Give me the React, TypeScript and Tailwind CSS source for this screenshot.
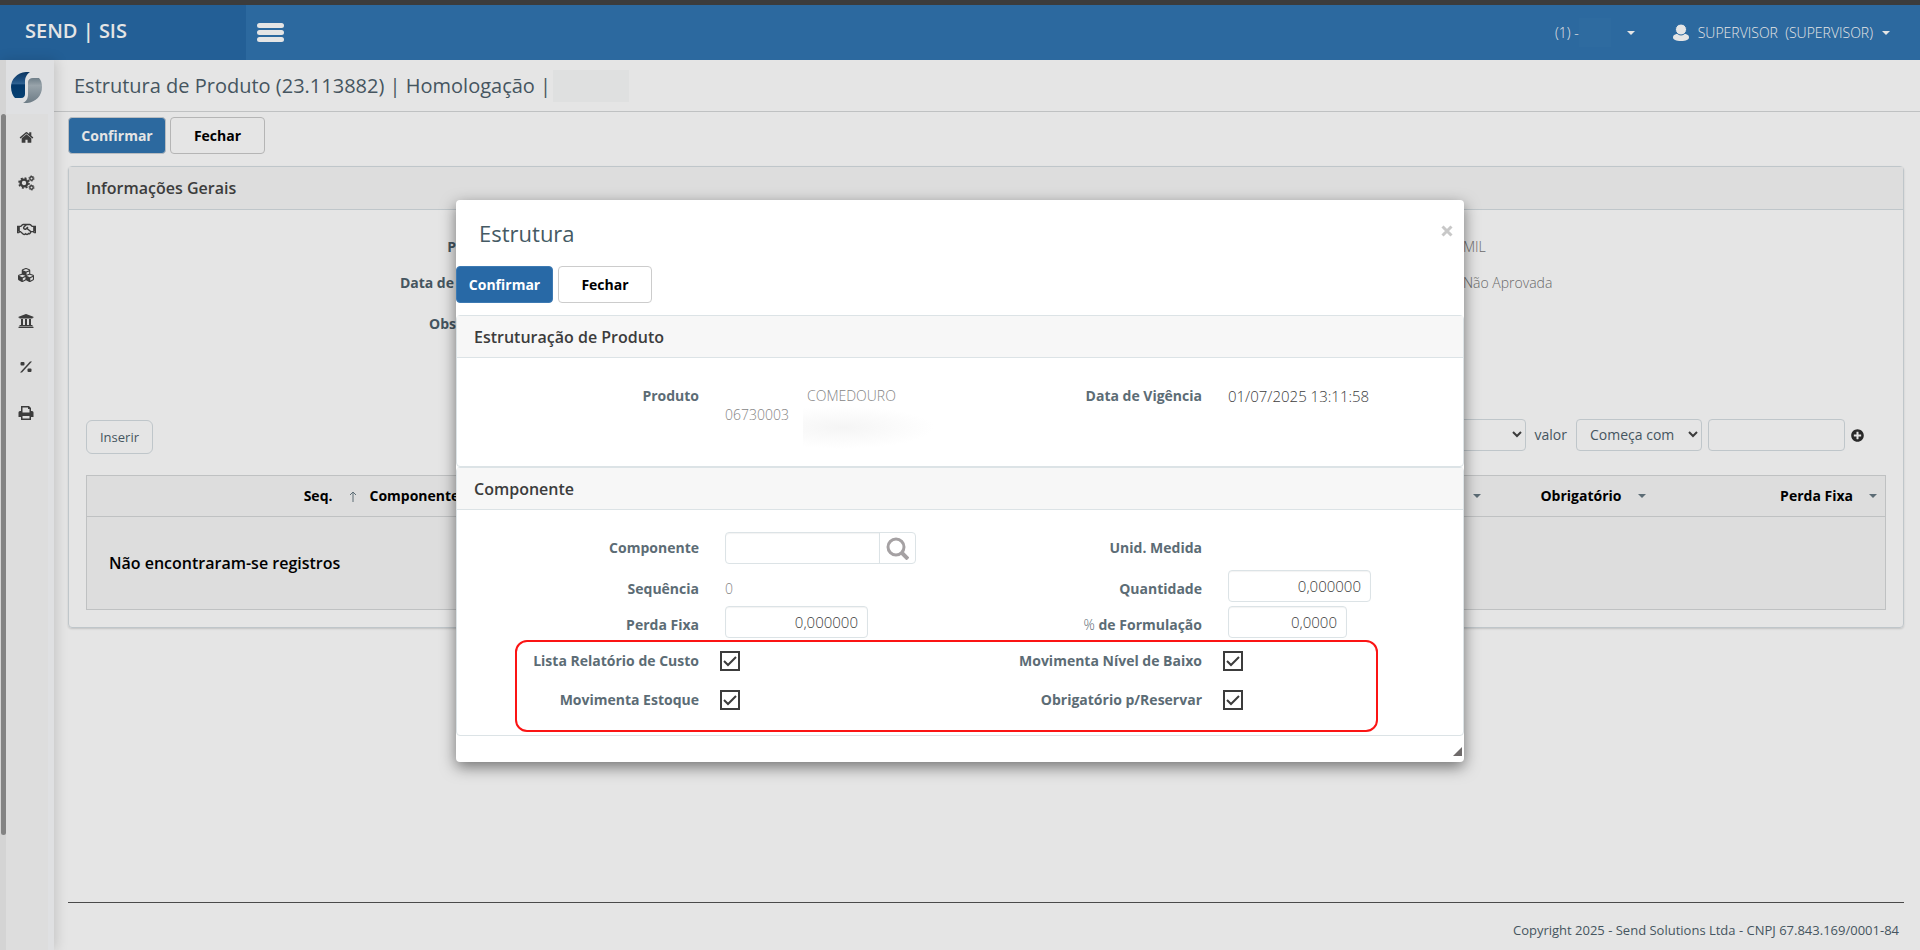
import React from "react";
import {
  FaRegHandshake,
  FaCubes,
  FaUniversity,
  FaPlusCircle,
} from "react-icons/fa";

const HomeIcon = () => (
  <svg viewBox="0 0 1792 1792" width="15" height="15" fill="currentColor">
    <path d="M1472 992v480q0 26-19 45t-45 19h-384v-384h-256v384h-384q-26 0-45-19t-19-45v-480q0-1 .5-3t.5-3l575-474 575 474q1 2 1 6zm223-69l-62 74q-8 9-21 11h-3q-13 0-21-7l-692-577-692 577q-12 8-24 7-13-2-21-11l-62-74q-8-10-7-23.500t11-21.500l719-599q32-26 76-26t76 26l244 204v-195q0-14 9-23t23-9h192q14 0 23 9t9 23v408l219 182q10 8 11 21.500t-7 23.500z" />
  </svg>
);

const CogsIcon = () => (
  <svg viewBox="0 0 17 16" width="17" height="16" fill="none" stroke="currentColor">
    <circle cx="6" cy="8" r="3.400" strokeWidth="2.400" />
    <circle cx="6" cy="8" r="5" strokeWidth="1.600" strokeDasharray="2 1.930" />
    <circle cx="13.500" cy="3.500" r="1.700" strokeWidth="1.400" />
    <circle cx="13.500" cy="3.500" r="2.600" strokeWidth="0.900" strokeDasharray="1.360 1.360" />
    <circle cx="13.500" cy="12.500" r="1.700" strokeWidth="1.400" />
    <circle cx="13.500" cy="12.500" r="2.600" strokeWidth="0.900" strokeDasharray="1.360 1.360" />
  </svg>
);

const PercentIcon = () => (
  <svg viewBox="0 0 12 12" width="12" height="12" fill="currentColor">
    <rect x="0.500" y="1" width="4" height="3.500" rx="1" />
    <rect x="7.500" y="7.500" width="4" height="3.500" rx="1" />
    <path d="M10 0.500h2L2 11.500H0z" />
  </svg>
);

const PrintIcon = () => (
  <svg viewBox="0 0 16 16" width="16" height="16" fill="currentColor">
    <path
      fillRule="evenodd"
      d="M3 1h8l2 2v3h1q1.500 0 1.500 1.500V12H13v3H3v-3H.5V7.500Q.5 6 2 6h1zM4.500 2.500V7.500h7V4H10V2.500zM4.500 11v2.500h7V11z"
    />
  </svg>
);

const Logo = () => (
  <svg viewBox="0 0 31 31" width="31" height="31">
    <defs>
      <linearGradient id="logoBlue" x1="0" y1="0" x2="0" y2="1">
        <stop offset="0" stopColor="#0a3560" />
        <stop offset="0.3" stopColor="#1d4f80" />
        <stop offset="0.45" stopColor="#2f6292" />
        <stop offset="0.5" stopColor="#03386a" />
        <stop offset="1" stopColor="#064072" />
      </linearGradient>
      <linearGradient id="logoGray" x1="0" y1="0" x2="0" y2="1">
        <stop offset="0" stopColor="#6f7f89" />
        <stop offset="0.3" stopColor="#98a3aa" />
        <stop offset="1" stopColor="#6d7c86" />
      </linearGradient>
    </defs>
    <path
      d="M19 0C8-1 0 6 0 15c0 5 2 9 4 11h6c3 0 4-2 4-4V10c0-5 2-8 5-10z"
      fill="url(#logoBlue)"
    />
    <path
      d="M31 15c0-4-1-7-3-9h-6c-3 0-5 2-5 4v12c0 4-1 7-5 9 11 1 19-6 19-16z"
      fill="url(#logoGray)"
    />
  </svg>
);

const UserIcon = () => (
  <svg viewBox="0 0 16 17" width="16" height="17" fill="#e5e5e5">
    <path d="M0 13.500c0-3 3-4 8-4s8 1 8 4c0 2-3 3.500-8 3.500s-8-1.500-8-3.500z" />
    <circle cx="8" cy="5.500" r="5.500" stroke="#2c699f" />
  </svg>
);

const Caret = () => (
  <svg viewBox="0 0 8 4" width="8" height="4" fill="currentColor">
    <path d="M0 0h8L4 4z" />
  </svg>
);

const Chevron = () => (
  <svg
    viewBox="0 0 10 7"
    width="10"
    height="7"
    fill="none"
    stroke="#3c3c3c"
    strokeWidth="2"
    className="pointer-events-none absolute right-1 top-3"
  >
    <path d="M1 1l4 4 4-4" />
  </svg>
);

const menu = [
  { label: "Início", icon: <HomeIcon /> },
  { label: "Processos", icon: <CogsIcon /> },
  { label: "Comercial", icon: <FaRegHandshake size={19} /> },
  { label: "Estoque", icon: <FaCubes size={16} /> },
  { label: "Financeiro", icon: <FaUniversity size={16} /> },
  { label: "Fiscal", icon: <PercentIcon /> },
  { label: "Relatórios", icon: <PrintIcon /> },
];

interface LabelProps {
  htmlFor?: string;
  low?: boolean;
  children: React.ReactNode;
}

const Label: React.FC<LabelProps> = ({ htmlFor, low, children }) => (
  <label
    htmlFor={htmlFor}
    className={`pr-[26px] text-right text-sm font-bold text-[#5c6c75] ${low ? "pt-1.5" : ""}`}
  >
    {children}
  </label>
);

const CheckField: React.FC<{ id: string; label: string }> = ({ id, label }) => (
  <>
    <Label htmlFor={id}>{label}</Label>
    <span className="relative -ml-[5px] flex h-5 w-5">
      <input
        id={id}
        type="checkbox"
        defaultChecked
        className="h-5 w-5 appearance-none border-2 border-[#3c3c3c] bg-white"
      />
      <svg
        viewBox="0 0 20 20"
        fill="none"
        stroke="#3c3c3c"
        strokeWidth="2"
        className="pointer-events-none absolute inset-0 h-5 w-5"
      >
        <path d="M4 10l4 4 8-8" />
      </svg>
    </span>
  </>
);

const numberInput =
  "h-8 rounded border border-[#dce3e6] bg-white px-[9px] text-right text-[15px] font-light text-[#3c3c3c] shadow-[inset_0_1px_1px_rgba(0,0,0,0.05)]";

const Modal = () => (
  <div className="absolute inset-x-0 top-[200px] flex justify-center px-4">
    <div
      role="dialog"
      aria-label="Estrutura"
      className="relative w-full max-w-[1008px] rounded bg-white shadow-[0_5px_15px_rgba(0,0,0,0.5)]"
    >
      <div className="flex h-[66px] items-center justify-between pl-[23px] pr-[11px]">
        <h2 className="text-[22px] text-[#455a64]">Estrutura</h2>
        <button aria-label="Fechar janela" className="-mt-1 text-[#c8c8c8]">
          <svg width="12" height="12" viewBox="0 0 12 12" stroke="currentColor" strokeWidth="3">
            <path d="M1.500 1.500l9 9M10.500 1.500l-9 9" />
          </svg>
        </button>
      </div>
      <div className="mb-3 flex gap-[5px]">
        <button className="h-[37px] w-[97px] rounded border border-[#3d7ab3] bg-[#2869a6] text-sm font-bold text-white">
          Confirmar
        </button>
        <button className="h-[37px] w-[94px] rounded border border-[#cccccc] bg-white text-sm font-bold text-black">
          Fechar
        </button>
      </div>

      <section className="rounded border border-[#dce3e6]">
        <h3 className="flex h-[42px] items-center border-b border-[#dce3e6] bg-[#f7f7f7] px-[17px] text-base font-semibold text-[#3c3c3c]">
          Estruturação de Produto
        </h3>
        <div className="grid h-[108px] grid-cols-[268px_1fr_268px_235px] items-start pt-7 text-sm">
          <Label>Produto</Label>
          <div className="flex font-light text-[#858585]">
            <span className="w-[82px] pt-[19px]">06730003</span>
            <div>
              <span>COMEDOURO</span>
              <div className="-ml-1 h-[43px] w-[132px] bg-[radial-gradient(ellipse_at_30%_50%,#f5f5f5,#ffffff_70%)]" />
            </div>
          </div>
          <Label>Data de Vigência</Label>
          <span className="text-[15px] font-light leading-5 text-[#3c3c3c]">01/07/2025 13:11:58</span>
        </div>
      </section>

      <section className="rounded border border-[#dce3e6]">
        <h3 className="flex h-[42px] items-center border-b border-[#dce3e6] bg-[#f7f7f7] px-[17px] text-base font-semibold text-[#3c3c3c]">
          Componente
        </h3>
        <div className="grid grid-cols-[268px_1fr_268px_235px] grid-rows-[40px_36px_36px_42px_36px] items-center pb-[17px] pt-[18px]">
          <Label htmlFor="componente">Componente</Label>
          <div className="flex h-8 w-[191px] rounded border border-[#dce3e6]">
            <input
              id="componente"
              className="min-w-0 flex-1 rounded-l px-2 text-sm shadow-[inset_0_1px_1px_rgba(0,0,0,0.05)]"
            />
            <button
              aria-label="Pesquisar"
              className="flex w-9 items-center justify-center border-l border-[#dce3e6] pr-0.5"
            >
              <svg width="24" height="24" viewBox="0 0 24 24" fill="none" stroke="#a5a1a3" strokeWidth="3">
                <circle cx="11" cy="11" r="8" />
                <path d="M16 16l7 7" strokeWidth="4" />
              </svg>
            </button>
          </div>
          <Label>Unid. Medida</Label>
          <span />

          <Label low>Sequência</Label>
          <span className="pt-1.5 text-sm font-light text-[#858585]">0</span>
          <Label htmlFor="quantidade" low>
            Quantidade
          </Label>
          <input id="quantidade" defaultValue="0,000000" className={`${numberInput} w-[143px]`} />

          <Label htmlFor="perda" low>
            Perda Fixa
          </Label>
          <input id="perda" defaultValue="0,000000" className={`${numberInput} w-[143px]`} />
          <Label htmlFor="formulacao" low>
            <span className="font-light">%</span> de Formulação
          </Label>
          <input id="formulacao" defaultValue="0,0000" className={`${numberInput} w-[119px]`} />

          <CheckField id="custo" label="Lista Relatório de Custo" />
          <CheckField id="nivel" label="Movimenta Nível de Baixo" />
          <CheckField id="estoque" label="Movimenta Estoque" />
          <CheckField id="reservar" label="Obrigatório p/Reservar" />
        </div>
      </section>

      <div className="h-[26px]" />
      {/* highlight around the four flags */}
      <div className="pointer-events-none absolute bottom-[30px] left-[59px] right-[86px] h-[92px] rounded-xl border-2 border-[#fb1414]" />
      <svg
        viewBox="0 0 9 9"
        width="9"
        height="9"
        fill="#6e6a6a"
        className="absolute bottom-1.5 right-0.5"
      >
        <path d="M9 0v9H0z" />
      </svg>
    </div>
  </div>
);

export default function App() {
  return (
    <div className="relative flex min-h-screen flex-col overflow-hidden bg-[#e5e5e5] font-['Open_Sans',sans-serif] text-[#455560]">
      <header className="flex h-[60px] border-t-[5px] border-[#3c3c3c] bg-[#2c699f] text-[#e5e5e5]">
        <div className="w-[246px] bg-[#235f96] pl-[25px] pt-3 text-xl font-semibold">
          SEND | SIS
        </div>
        <button aria-label="Menu" className="ml-[11px] flex flex-col justify-center gap-0.5">
          <span className="h-[5px] w-[27px] rounded-sm bg-[#e5e5e5]" />
          <span className="h-[5px] w-[27px] rounded-sm bg-[#e5e5e5]" />
          <span className="h-[5px] w-[27px] rounded-sm bg-[#e5e5e5]" />
        </button>
        <div className="ml-auto flex items-center pr-[30px] text-sm font-light">
          <button className="mr-[38px] flex items-center">
            (1) -<span className="mr-4 h-[29px] w-8 bg-[#2e6ba0]" />
            <Caret />
          </button>
          <button className="flex items-center gap-[9px]">
            <UserIcon />
            <span className="whitespace-pre">SUPERVISOR  (SUPERVISOR)</span>
            <Caret />
          </button>
        </div>
      </header>

      <div className="flex flex-1">
        <aside className="relative z-10 w-[54px] bg-[#dfe0e2] pl-[6px] shadow-[2px_0_12px_rgba(0,0,0,0.15)]">
          <div className="absolute left-0 top-0 h-full w-[6px] bg-[#d4d4d4]" />
          <div className="absolute left-px top-[54px] h-[721px] w-[5px] rounded-full bg-[#838383]" />
          <div className="flex h-[54px] items-center pl-[5px]">
            <Logo />
          </div>
          <nav className="h-[calc(100%-54px)] w-[42px] bg-[#dddddd] text-[#3c3c3c]">
            {menu.map((item) => (
              <a
                key={item.label}
                href="#"
                aria-label={item.label}
                className="flex h-[46px] items-center justify-center pr-0.5"
              >
                {item.icon}
              </a>
            ))}
          </nav>
        </aside>

        <div className="flex min-w-0 flex-1 flex-col">
          <div className="flex h-[52px] items-center border-b border-[#bfc1c2] pl-5">
            <h1 className="text-xl">
              Estrutura de Produto (23.113882) | Homologação |
            </h1>
            <span className="ml-0.5 h-8 w-[76px] bg-[#dfe0e0]" />
          </div>

          <main className="flex flex-1 flex-col pl-[14px] pr-4">
            <div className="flex gap-1 pb-3 pt-[5px]">
              <button className="h-[37px] w-[98px] rounded border border-[#b8bcc0] bg-[#2c699f] text-sm font-bold text-[#e5e5e5]">
                Confirmar
              </button>
              <button className="h-[37px] w-[95px] rounded border border-[#b5b5b5] text-sm font-bold text-black">
                Fechar
              </button>
            </div>

            <section className="rounded border border-[#bfc6ca] shadow-[0_1px_2px_rgba(0,0,0,0.15)]">
              <h2 className="flex h-[43px] items-center border-b border-[#bfc6ca] bg-[#dddddd] px-[17px] text-base font-semibold text-[#3c3c3c]">
                Informações Gerais
              </h2>
              <div className="px-[17px] pb-[17px]">
                <div className="grid grid-cols-[370px_1fr_439px] grid-rows-[36px_36px_46px] items-center pt-[19px] text-sm">
                  <span className="text-right font-bold">P</span>
                  <span />
                  <span className="pl-4 font-light text-[#6a6a6a]">MIL</span>
                  <span className="pr-0.5 text-right font-bold">Data de</span>
                  <span />
                  <span className="pl-4 font-light text-[#6a6a6a]">Não Aprovada</span>
                  <span className="text-right font-bold">Obs</span>
                </div>

                <div className="flex items-center pb-[21px] pt-[69px] text-sm">
                  <button className="mt-1 h-[34px] w-[67px] rounded-md border border-[#bfc6ca] text-[13px]">
                    Inserir
                  </button>
                  <div className="ml-auto flex items-center pr-[22px]">
                    <div className="relative">
                      <select
                        aria-label="Campo"
                        className="h-8 w-[150px] appearance-none rounded border border-[#bfc6ca] px-3"
                      />
                      <Chevron />
                    </div>
                    <label htmlFor="valor" className="px-[9px]">
                      valor
                    </label>
                    <div className="relative mr-[6px]">
                      <select
                        aria-label="Condição"
                        className="h-8 w-[126px] appearance-none rounded border border-[#bfc6ca] px-[13px]"
                      >
                        <option>Começa com</option>
                      </select>
                      <Chevron />
                    </div>
                    <input
                      id="valor"
                      className="mr-[6px] h-8 w-[137px] rounded border border-[#bfc6ca] px-2"
                    />
                    <button aria-label="Adicionar filtro">
                      <FaPlusCircle size={13} color="#2a2a2a" />
                    </button>
                  </div>
                </div>

                <table className="w-full table-fixed border border-[#bfc1c2] bg-[#dddddd] text-sm text-black">
                  <thead>
                    <tr className="h-[41px] border-b border-[#bfc1c2]">
                      <th className="w-[276px] text-right">
                        <span className="inline-flex items-center gap-4 pr-1.5">
                          Seq.
                          <svg width="8" height="11" viewBox="0 0 8 11" stroke="#5c6c75" fill="none">
                            <path d="M4 11V1M1 4l3-3 3 3" />
                          </svg>
                        </span>
                      </th>
                      <th className="w-[370px] pl-[7px] text-left">Componente</th>
                      <th>
                        <span className="flex justify-end pr-2 text-[#5c6c75]">
                          <Caret />
                        </span>
                      </th>
                      <th className="w-[165px] text-right">
                        <span className="inline-flex items-center gap-4 pr-2">
                          Obrigatório
                          <span className="text-[#5c6c75]">
                            <Caret />
                          </span>
                        </span>
                      </th>
                      <th className="w-[232px] text-right">
                        <span className="inline-flex items-center gap-4 pr-2">
                          Perda Fixa
                          <span className="text-[#5c6c75]">
                            <Caret />
                          </span>
                        </span>
                      </th>
                    </tr>
                  </thead>
                  <tbody>
                    <tr className="h-[93px]">
                      <td colSpan={5} className="px-[22px] text-base font-semibold">
                        Não encontraram-se registros
                      </td>
                    </tr>
                  </tbody>
                </table>
              </div>
            </section>

            <footer className="mt-auto h-12 border-t border-[#4a4a4a] pr-[5px] pt-[18px] text-right text-[13px]">
              Copyright 2025 - Send Solutions Ltda - CNPJ 67.843.169/0001-84
            </footer>
          </main>
        </div>
      </div>

      <Modal />
    </div>
  );
}
